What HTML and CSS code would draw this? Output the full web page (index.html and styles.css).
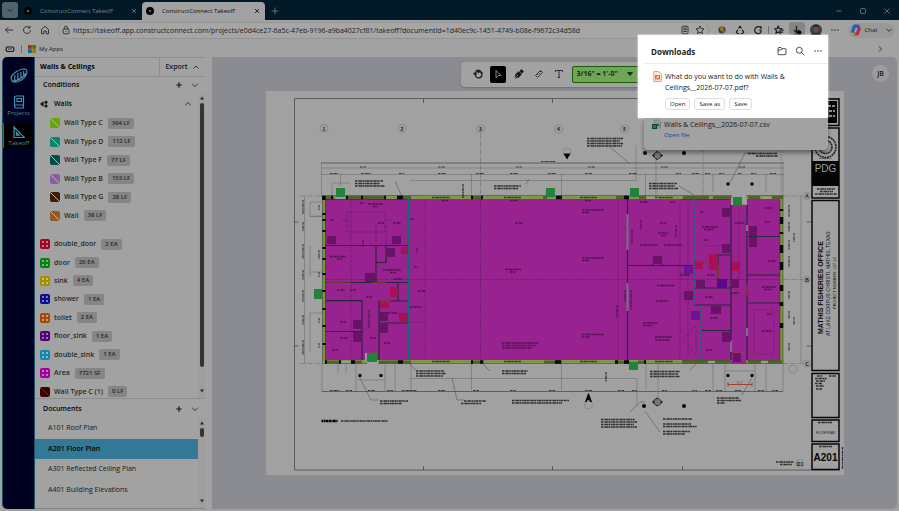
FILE: index.html
```html
<!DOCTYPE html>
<html lang="en">
<head>
<meta charset="utf-8">
<title>ConstructConnect Takeoff</title>
<link rel="stylesheet" href="styles.css">
</head>
<body>
<header class="tabs">
  <button class="tab-menu" aria-label="Tab actions"><svg viewBox="0 0 8 8"><path d="M1.5 3l2.5 2.5L6.500 3"/></svg></button>
  <div class="tab"><span class="favicon"></span><span class="tab-title">ConstructConnect Takeoff</span><button aria-label="Close tab"><svg viewBox="0 0 8 8"><path d="M2 2l4 4M6 2l-4 4"/></svg></button></div>
  <div class="tab active"><span class="favicon"></span><span class="tab-title">ConstructConnect Takeoff</span><button aria-label="Close tab"><svg viewBox="0 0 8 8"><path d="M2 2l4 4M6 2l-4 4"/></svg></button></div>
  <button class="new-tab" aria-label="New tab"><svg viewBox="0 0 8 8"><path d="M4 .5v7M.5 4h7"/></svg></button>
  <div class="window-buttons">
    <button aria-label="Minimize"><svg viewBox="0 0 8 8"><path d="M1.500 4h5"/></svg></button>
    <button aria-label="Maximize"><svg viewBox="0 0 8 8"><rect x="1.500" y="1.500" width="5" height="5" rx="1"/></svg></button>
    <button aria-label="Close"><svg viewBox="0 0 8 8"><path d="M1.500 1.500l5 5M6.500 1.500l-5 5"/></svg></button>
  </div>
</header>
<div class="address-row">
  <button aria-label="Back"><svg viewBox="0 0 10 10"><path d="M9 5H1.500M4.500 2L1.500 5l3 3"/></svg></button>
  <button aria-label="Reload"><svg viewBox="0 0 10 10"><path d="M8.500 5A3.500 3.500 0 1 1 7 2.100M8 .8v2.200H5.800"/></svg></button>
  <button aria-label="Home"><svg viewBox="0 0 10 10"><path d="M1.500 4.500L5 1.200l3.500 3.300v4.300H6.200V6H3.800v2.800H1.500z"/></svg></button>
  <div class="address">
    <svg viewBox="0 0 10 10"><rect x="2" y="4" width="6" height="4.800" rx="1"/><path d="M3.300 4V2.800a1.700 1.700 0 0 1 3.400 0V4M5 6v1"/></svg>
    <input aria-label="Address" value="https://takeoff.app.constructconnect.com/projects/e0d4ce27-6a5c-47eb-9196-a9ba4027cf81/takeoff?documentId=1d40ec9c-1451-4749-b08e-f9672c34d58d">
    <svg viewBox="0 0 10 10"><rect x="2" y="1.200" width="6" height="7.600" rx="1"/><path d="M3.300 3.200h3.400M3.300 4.800h3.400M3.300 6.500h3.400"/></svg>
    <svg viewBox="0 0 10 10"><path d="M5 1l1.200 2.600 2.800.3-2.100 1.900.6 2.800L5 7.200 2.500 8.600l.6-2.800L1 3.900l2.800-.3z"/></svg>
  </div>
  <div class="browser-actions">
    <button aria-label="Extension"><svg viewBox="0 0 10 10"><circle cx="5" cy="5" r="3.600" fill="#4b3a22" stroke="none"/><circle cx="4.800" cy="3.900" r="2" fill="#9a7b12" stroke="none"/><circle cx="6.500" cy="6.600" r="1.500" fill="#5c6a7a" stroke="none"/></svg></button>
    <button aria-label="Recycle"><svg class="bold" viewBox="0 0 10 10"><path d="M3.500 3.500L5 1.300l1.500 2.200M7.200 4.700l1.500 2.500-1 1.300H5.800M2.700 4.700L1.300 7.200l1 1.300h2"/></svg></button>
    <button aria-label="Extensions"><svg class="bold" viewBox="0 0 10 10"><path d="M8 3A3.500 3.500 0 1 0 8 7.300M6 1.800h2V4M6.200 5.300H8v2"/></svg></button>
    <i></i>
    <button aria-label="Favorites"><svg class="bold" viewBox="0 0 10 10"><path d="M4.200 1.200l1 2.300 2.400.3-1.700 1.800.4 2.600-2.100-1.300L2 8.200l.5-2.600L.8 3.800l2.400-.3zM7.500 5.200h2M7.200 7.200h2"/></svg></button>
    <button class="download-button" aria-label="Downloads"><svg class="bold" viewBox="0 0 10 10"><path d="M4.500 1v6M2 5l2.500 2.500L7 5M2 9h5"/><circle cx="7.300" cy="7.600" r="2.200" fill="#000" stroke="none"/></svg></button>
    <button class="profile" aria-label="Profile"><svg viewBox="0 0 12 12"><circle cx="6" cy="6" r="6" fill="#2e4455" stroke="none"/><path d="M1 10.500Q6 6 11 10.500L9 12H3z" fill="#151b2d" stroke="none"/><ellipse cx="6" cy="5.500" rx="2.600" ry="3.500" fill="#78452f" stroke="none"/><path d="M3 3.500Q6-1 9 3.500L8 2.800H4z" fill="#1a1110" stroke="none"/></svg></button>
    <button aria-label="Settings and more"><svg viewBox="0 0 10 10"><path class="dots" d="M2 5h.01M5 5h.01M8 5h.01"/></svg></button>
    <button class="chat"><svg viewBox="0 0 12 12"><path d="M1 7.500L3 1.500Q3.500.5 5 .5h2.500L5 9H2.500Q1 9 1 7.500z" fill="#1766b0" stroke="none"/><path d="M7 .5h1.200q1 0 1.300 1L10 4H6.500z" fill="#6c3fa5" stroke="none"/><path d="M11 4.500L9 10.500q-.4 1-1.500 1H4.500L7 3.500h3q1.300 0 1 1z" fill="#b0305a" stroke="none"/><path d="M2 8.500h3.500l-.7 3H4q-1 0-1.300-1z" fill="#b98418" stroke="none"/><path d="M5.500 4h1.700L6.300 8H4.400z" fill="#aaa" stroke="none"/></svg>Chat<svg class="chevron" viewBox="0 0 8 8"><path d="M1.500 2.800L4 5.300l2.500-2.500"/></svg></button>
  </div>
</div>
<nav class="bookmarks" aria-label="Bookmarks">
  <svg viewBox="0 0 10 10"><rect class="heavy" x="1.200" y="3" width="7.600" height="4.500" rx="1.200"/><path d="M3 5h4"/></svg>
  <i></i>
  <a href="#"><svg viewBox="0 0 8 8"><path fill="#9c3413" stroke="none" d="M0 0h3.800v3.800H0z"/><path fill="#4c7805" stroke="none" d="M4.200 0H8v3.800H4.200z"/><path fill="#006a9b" stroke="none" d="M0 4.200h3.800V8H0z"/><path fill="#a37605" stroke="none" d="M4.200 4.200H8V8H4.200z"/></svg>My Apps</a>
  <button aria-label="More bookmarks"><svg viewBox="0 0 8 8"><path d="M3 1.500L5.500 4 3 6.500"/></svg></button>
</nav>
<main class="app">
  <nav class="rail" aria-label="Main">
    <svg class="logo" viewBox="0 0 18 18"><path d="M2 14Q-.5 10 4 6.500 9 2 14.500 2 18 2.500 16.500 7 14.500 12 8.500 14.500 4.500 16 2 14zM2 14q7 .5 14-7.500M4.800 8v5M7.800 6v7M10.800 5v6.500M13.700 4v4.500"/></svg>
    <a href="#"><svg viewBox="0 0 12 14"><path d="M1.500 11.500V3q0-2 2-2h7v9H3q-1.500 0-1.500 1.500T3 13h7.500v-3M4 3.500h4.500v3H4z"/></svg>Projects</a>
    <a href="#" class="current"><svg viewBox="0 0 12 14"><path d="M1 2v10.500h10.500zM3.500 7.500v2.700h2.700zM1 4h1.500M1 6h1.500"/></svg>Takeoff</a>
  </nav>
  <aside class="panel">
    <div class="project-row"><h1>Walls &amp; Ceilings</h1><button>Export<svg viewBox="0 0 8 8"><path d="M1.500 5.500L4 3l2.500 2.500"/></svg></button></div>
    <section class="conditions">
      <header><h2>Conditions</h2><button aria-label="Add condition"><svg class="bold" viewBox="0 0 8 8"><path d="M4 1.200v5.600M1.200 4h5.600"/></svg></button><button aria-label="Collapse conditions"><svg viewBox="0 0 8 8"><path d="M1.200 2.800L4 5.600l2.800-2.800"/></svg></button></header>
      <div class="scroll-area">
        <div class="condition-list">
          <div class="group-title"><svg viewBox="0 0 8 8"><path d="M.5 4l2.700-2.200v4.400z" fill="#070b10"/><circle cx="6" cy="2.300" r="1.200" fill="#070b10"/><circle cx="6" cy="6" r="1.200" fill="#070b10"/></svg><h3>Walls</h3><button aria-label="Collapse Walls"><svg viewBox="0 0 8 8"><path d="M1.200 5.200L4 2.600l2.800 2.600"/></svg></button></div>
          <ul class="nested">
            <li><span class="swatch line lime"></span>Wall Type C<b>364 LF</b></li>
            <li><span class="swatch line mint"></span>Wall Type D<b>112 LF</b></li>
            <li><span class="swatch line pine"></span>Wall Type F<b>77 LF</b></li>
            <li><span class="swatch line lilac"></span>Wall Type B<b>153 LF</b></li>
            <li><span class="swatch line brown"></span>Wall Type G<b>28 LF</b></li>
            <li><span class="swatch line tan"></span>Wall<b>38 LF</b></li>
          </ul>
          <ul class="items">
            <li><span class="swatch count red"></span>double_door<b>2 EA</b></li>
            <li><span class="swatch count green"></span>door<b>26 EA</b></li>
            <li><span class="swatch count yellow"></span>sink<b>4 EA</b></li>
            <li><span class="swatch count blue"></span>shower<b>1 EA</b></li>
            <li><span class="swatch count orange"></span>toilet<b>2 EA</b></li>
            <li><span class="swatch count purple"></span>floor_sink<b>1 EA</b></li>
            <li><span class="swatch count sky"></span>double_sink<b>1 EA</b></li>
            <li><span class="swatch count pink"></span>Area<b>7721 SF</b></li>
            <li><span class="swatch line maroon"></span>Wall Type C (1)<b>0 LF</b></li>
          </ul>
        </div>
        <div class="scrollbar"><svg viewBox="0 0 6 6"><path d="M1 4.500L3 1.500l2 3z"/></svg><span class="thumb long"></span><span class="track"></span><svg viewBox="0 0 6 6"><path d="M1 1.500L3 4.500l2-3z"/></svg></div>
      </div>
    </section>
    <section class="documents">
      <header><h2>Documents</h2><button aria-label="Add document"><svg class="bold" viewBox="0 0 8 8"><path d="M4 1.200v5.600M1.200 4h5.600"/></svg></button><button aria-label="Collapse documents"><svg viewBox="0 0 8 8"><path d="M1.200 2.800L4 5.600l2.800-2.800"/></svg></button></header>
      <div class="scroll-area">
        <div class="document-list"><a href="#">A101 Roof Plan</a><a href="#" class="selected">A201 Floor Plan</a><a href="#">A301 Reflected Ceiling Plan</a><a href="#">A401 Building Elevations</a></div>
        <div class="scrollbar"><svg viewBox="0 0 6 6"><path d="M1 4.500L3 1.500l2 3z"/></svg><span class="thumb short"></span><span class="track"></span><svg viewBox="0 0 6 6"><path d="M1 1.500L3 4.500l2-3z"/></svg></div>
      </div>
    </section>
  </aside>
  <section class="canvas" aria-label="Drawing">
    <div class="canvas-bar">
      <div class="tools">
        <button aria-label="Pan"><svg viewBox="0 0 10 10"><path class="heavy" d="M2 6L1 4.500l.8-.5L3 5V2l1-.5L5 3V1.200l1 .1V3l1.200-1 .7.5v1.300l1-.2V6.500Q8 9 5.500 9 3.500 9 2 6z"/></svg></button>
        <button class="active" aria-label="Select"><svg viewBox="0 0 10 10"><path d="M3 1.500l5 5H5.500L3 8.800z" stroke="#aaa"/></svg></button>
        <button aria-label="Draw"><svg viewBox="0 0 10 10"><path d="M1 9l1-4 3-2.500 2.500 2.500L5 8zM6 2L7.500.5l2 2L8 4z" fill="#15181c"/><path d="M1 9l3-3" stroke="#999"/></svg></button>
        <button aria-label="Measure"><svg viewBox="0 0 10 10"><path d="M1.500 6.500l5-5 2 2-5 5zM3 5l1 1M4.500 3.500l1 1M6 2l1 1"/></svg></button>
        <button aria-label="Text"><svg viewBox="0 0 10 10"><path d="M1.500 3V1.500h7V3M5 1.500v7M3.800 8.500h2.400"/></svg></button>
        <div class="scale"><select aria-label="Scale"><option>3/16" = 1'-0"</option></select><svg viewBox="0 0 6 6"><path d="M.5 1.500h5L3 4.500z"/></svg></div>
      </div>
      <button class="avatar">JB</button>
    </div>
    <svg class="sheet" viewBox="266 91 578 384" role="img" aria-label="Floor plan sheet A201">
      <rect class="paper" x="266" y="91" width="578" height="384"/>
      <path class="frame" d="M840 98.500H294.500V470H840M423.500 99v4M552.500 99v4M423.500 470v-4M552.500 470v-4M682.500 470v-4M294.500 222h4M294.500 346h4M811 222h-4M811 346h-4"/>
      <!-- grid bubbles and dimension strings -->
      <g class="bubble"><circle cx="324" cy="128.500" r="4"/><circle cx="402" cy="128.500" r="4"/><circle cx="480.500" cy="128.500" r="4"/><circle cx="558.500" cy="129" r="4"/><circle cx="624.500" cy="129" r="4"/><circle cx="807" cy="196" r="3.500"/><circle cx="807" cy="279.500" r="3.500"/><circle cx="807" cy="363.500" r="3.500"/><circle cx="567" cy="152" r="4"/><circle cx="588.500" cy="405" r="4"/><circle cx="793" cy="369" r="4"/><circle cx="800" cy="463.500" r="4"/></g>
      <g class="bubble-text"><text x="324" y="130.500">1</text><text x="402" y="130.500">2</text><text x="480.500" y="130.500">3</text><text x="558.500" y="131">4</text><text x="624.500" y="131">5</text><text x="807" y="198">A</text><text x="807" y="281.500">B</text><text x="807" y="365.500">C</text><text x="800" y="465.500">D1</text></g>
      <path class="dim strong" d="M321.500 163H784M322 391.500H783"/>
      <path class="dim" d="M321.500 168H784M321.500 174.500H784M321.500 162v34M783 162v34M410 180.500H636V145M471.500 174v22M561.500 174v22M645.500 174v22M656 148v68M713 174v18M766 174v18M340.500 174v12M332 183h18M332 183v12M322 363.500V392M410 378.500H637v28M471.500 363.500v27M561.500 363.500v27M646 363.500v27M658 345v55M783 363.500v28M411 363.500v28M356 363.500v28M385 363.500v28M395 363.500v28M346 363.500v10M338 363.500v10M357 380h28M713 363.500v28M725 363.500v28M755 363.500v28M766 363.500v28M725 371h30M304.500 196v167M310 202v14.500h12M310 202h12M310 246v30M310 313v38M801 196v167M310 272h12M310 216h12M310 313h12"/>
      <path class="dim dash" d="M300 196h22M300 363.500h22M783 196h20M783 279.500h20M783 363.500h20M480.500 133v62M703 148v50M781 148v50"/>
      <path class="notes tiny" d="M330 173.500h8M361 173.500h10M399 173.500h5M438 173.500h8M476 173.500h8M510 173.500h8M548 173.500h8M585 173.500h7M629 173.500h8M676 173.500h5M692 173.500h7M705 173.500h5M719 173.500h5M738 173.500h4M751 173.500h5M770 173.500h6M360 167h6M438 167h7M516 167h6M588 167h7M661 167h7M739 167h6M541 161.500h14M330 390.500h9M346 390.500h6M368 390.500h7M387 390.500h6M402 390.500h15M438 390.500h7M473 390.500h6M510 390.500h6M549 390.500h6M585 390.500h7M618 390.500h6M632 390.500h5M662 390.500h5M692 390.500h5M705 390.500h6M716 390.500h6M735 390.500h6M758 390.500h6M772 390.500h6M303 200v14M303 222v9M303 244v15M303 270v10M303 290v12M303 315v10M303 340v15M789 205v12M789 222v10M789 240v10M789 256v11M789 291v8M789 311v8M794 233v9M794 317v8M789 343v8M319 205v5M319 250v9M319 272v5M319 318v5M319 343v5"/>
      <path class="leaders" d="M395 181l7 16M526 184l3-5M610 147l20 17M679 186l15 9M730 183l15-30h10M408 361l8 10M359 376l12 24h7M452 378l5 22h7M645 411l15 21M630 412l10-10h5M752 378l-10 17M697 363l-7 7M482 363l8 8"/>
      <!-- floor area and walls -->
      <path class="area" d="M325 199H731v6h16v-6h33V360H747v4H732v-4H325z"/>
      <path class="wall-outer" d="M324 361V197.500H732M746 197.500h35.500V361.500H746M732 361.500H378M367 361.500H324"/>
      <path class="wall-edge" d="M322.500 363.500V195.500H732M746 195.500h37V363.500H746M732 363.500H378M367 363.500H322.500M325.500 360.500V199.500H411M681 199.500h50M780 199.500V360.500H747M731 360.500H682"/>
      <path class="wall-black" d="M322 197.500h12M346 197.500h40M397 197.500h14M471 197.500h12M543 197.500h4M556 197.500h6M616 197.500h12M639 197.500h7M683 197.500h26M713 197.500h18M748 197.500h12M772 197.500h11M325 362h16M351 362h11M379 362h19M402 362h9M471 362h13M544 362h18M615 362h14M638 362h8M682 362h26M715 362h17M748 362h13M768 362h14"/>
      <path class="wall-dark" d="M324 196v4M324 213v2M324 219v2M324 230v2M324 247v2M324 258v2M324 273v2M324 290v2M324 308v2M324 325v2M324 343v2M781.500 209v2M781.500 217v7M781.500 232v2M781.500 245v8M781.500 262v8M781.500 285v6M781.500 302v4M781.500 323v5M322 197.500h3M331 197.500h2M346 197.500h2M361 197.500h2M384 197.500h2M397 197.500h6M471 197.500h2M481 197.500h2M556 197.500h6M624 197.500h5M325 362h2M339 362h2M351 362h4M398 362h5M471 362h2M480 362h3M555 362h6M615 362h3M624 362h5M644 362h2"/>
      <path class="gap" d="M342 362h8M336 198h9M762 198h9M647 198h12M708 362h7M761 362h7M366 354h5v7h-5z"/>
      <path class="wall-inner" d="M325 245.500h83M376 245.500v37M386 245.500v17h-10M325 282.500h83M326 300.700h36v59.300M326 331.500h36M408 301h-29v59M379 323h29M398 283v18M627.500 199v161M628 265.500h66M695 262h23v-7h13v33h-36M718 262v18M731 205v155M747 205v155M748 236.500h32M748 275h32M748 303h32M694 305h37M701 330.500h30M653 265.500v-2h9v2"/>
      <path class="teal-wall" d="M408.500 198v162M694 199v106M701 305v55"/>
      <path class="glass" d="M627.500 214v36M627.500 283v28M731 340v12M747 225v6M747 328v8"/>
      <path class="accent" d="M326 283h24M372 283h14M396 287v9M380 301h10M370 353h7M696 262h14M718 265v13M726 281v7M733 205h13M747 285v10M734 353h10"/>
      <path class="faint" d="M351 199v161M425 199v161M480.500 199v161M618 199v161M325 279.500h455M347 212h38v20h-38zM342 220h6M386 220h6M410 322h15M376 225v20M386 225v20M688 202v155M739 210v70M754 310h20v44h-20zM683 340l13-15v30zM703 246h28M680 206v155"/>
      <path class="door" d="M327 236h9v8h-9zM392 236h9v8h-9zM387 248h8v9h-8zM365 273h10v9h-10zM379 312h9v9h-9zM353 320h8v9h-8zM353 332h8v10h-8zM379 324h9v9h-9zM722 208h8v9h-8zM722 244h8v9h-8zM749 226h8v10h-8zM749 237h8v10h-8zM653 256h9v8h-9zM684 291h9v9h-9zM696 280h9v8h-9zM732 279h7v9h-7zM711 306h10v8h-10zM722 332h9v10h-9zM733 353h8v9h-8z"/>
      <path class="purple-mark" d="M717 279h10v9h-10z"/><path class="violet-mark" d="M684 266h9v8h-9zM691 311h9v9h-9z"/>
      <path class="red-mark" d="M401 247h7v7h-7zM390 287h8v10h-8zM380 302h9v6h-9zM399 313h9v9h-9zM695 262h8v7h-8zM709 254h9v16h-9zM732 262h8v9h-8z"/>
      <path class="green-mark" d="M336 188h9v9h-9zM546 188h9v9h-9zM630 188h9v9h-9zM733 197h9v8h-9zM314 289h8v10h-8zM367 353h10v9h-10zM629 362h9v8h-9z"/>
      <path class="notes inside" d="M368 204h15M373 206.500h5M360 203h4M331 220h3M378 223h6M393 223h8M330 256.500h16M337 259h5M383 270h18M390 272.500h6M394 279h8M337 290h8M350 290h6M418 291h8M366 297h6M410 307h12M340 322h6M388 313h10M332 350h6M384 343h6M340 338h8M370 338h6M363 240v7M369 310v18M410 219h4M417 248v5M414 267h4M515 223h8M505 269.500h16M510 272h6M582 210h22M582 212.500h7M582 258h22M582 260.500h7M442 200.500h6M510 200.500h8M585 200.500h6M582 334.500h22M582 337h8M502 343h36M502 345.500h34M502 348h30M640 245h18M664 245h18M658 233h10M661 235.500h5M660 223h6M657 285.500h18M656 301h12M643 323h15M643 325.500h10M655 337h17M655 340h15M676 225v12M632 230v14M631 290v20M625 290v12M617 305v12M702 227h16M704 229.500h10M735 223h10M765 208h8M768 261h8M762 287h14M764 289.500h8M762 331h10M707 275h8M730 293h9M710 318h8M706 350h6M705 297h8M700 212h4M704 240h5M640 202h8M670 202h5M641 220v10M680 275h10M765 222h5M767 314h5"/>
      <path class="notes wall-label" d="M432 197.500h18M504 197.500h17M580 197.500h17M655 197.500h18M432 361.500h18M504 361.500h17M580 361.500h17M655 361.500h18"/>
      <!-- drawing notes -->
      <path class="notes" d="M587 138.500h36M587 141h33M587 143.500h36M587 146h35M355 181h28M355 183.500h25M355 186h30M494 186h27M494 188.500h24M649 183.500h28M649 186h26M649 188.500h29M748 153.500h29M756 156h22M416 371h28M416 373.500h30M416 376h27M380 401h28M380 403.500h22M464 401h22M461 403.500h20M502 371h26M502 373.500h24M512 400.500h57M512 403h50M601 419.500h34M601 422h36M601 424.500h33M601 427h36M650 371.500h30M650 374h28M650 376.500h30M663 419h29M663 424h28M663 426.500h34M663 431.500h27M663 434h22M717 398h22M717 400.500h24M717 403h8M776 462h18M780 464.500h12M817 189h18M820 191.500h13M815 194h22M817 376h5M829 376h7M815 378.500h12M816 381h9M815 383.500h7M816 386h8M816 389h6M463 184v14M606 372v10M842.500 447v22M818 422.500h14M819 446.500h13"/>
      <path class="notes heading" d="M321.500 421h16"/><path class="notes" d="M341 421h47"/>
      <path class="black" d="M563.500 153.500h7l-3.500 6zM652 155.500l5-4.500 6 4.500-6 4.500zM652 402l5-4.500 6 4.500-6 4.500zM585 402l3-8.500h1l3 8.500h-2l-.6-1.800h-2.200l-.6 1.800z"/>
      <g class="black"><circle cx="645" cy="153" r="2"/><circle cx="684" cy="153" r="2"/><circle cx="728" cy="184" r="1.700"/><circle cx="752" cy="184" r="1.700"/><circle cx="360" cy="375.500" r="1.700"/><circle cx="381" cy="375.500" r="1.700"/><circle cx="644" cy="406" r="2"/><circle cx="684" cy="406" r="2"/><circle cx="728" cy="375.500" r="1.700"/><circle cx="752" cy="375.500" r="1.700"/></g>
      <circle class="target" cx="657.500" cy="155.500" r="3.500"/><circle class="target" cx="657.500" cy="402" r="3.500"/>
      <path class="red-dim" d="M728 384.500h24M728 382.500v4M752 382.500v4"/><text class="red-text" x="740" y="383.500">8'-0"</text>
      <!-- title block -->
      <path class="block" d="M812 99h27v26.500h-27zM812 128h27v70h-27zM812 200.500h27v170h-27zM812 373.500h27v44h-27zM812 420h27v21.500h-27zM812 444h27v25.500h-27z"/>
      <path class="black" d="M814 101h23v22h-23zM812 161h27v25h-27z"/>
      <path class="light" d="M817 106h8M817 111h18M817 116h18M828 106h7"/>
      <g class="seal"><circle cx="825.500" cy="147" r="10.500"/><circle cx="825.500" cy="147" r="6.500"/><path d="M819 158.500h13"/></g>
      <text class="pdg" x="825.500" y="172">PDG</text>
      <text class="t-project" transform="translate(822.500 334) rotate(-90)">MATHIS FISHERIES OFFICE</text>
      <text class="t-place" transform="translate(830 336) rotate(-90)">AT LAKE CORPUS CHRISTI, MATHIS, TEXAS</text>
      <text class="t-number" transform="translate(836 309) rotate(-90)">PROJECT NUMBER: 127-14</text>
      <text class="t-sheet" x="825.500" y="434">FLOOR PLAN</text>
      <text class="t-code" x="825.500" y="461">A201</text>
    </svg>
  </section>
</main>
<div class="downloads" role="dialog" aria-labelledby="downloads-title">
  <div class="spotlight">
    <header><h2 id="downloads-title">Downloads</h2>
      <button aria-label="Open folder"><svg viewBox="0 0 10 10"><path d="M1 2.500Q1 1.500 2 1.500h2l1 1.200h3Q9 2.700 9 3.500V8Q9 8.700 8 8.700H2Q1 8.700 1 8zM1 4h3l1-1.300"/></svg></button>
      <button aria-label="Search downloads"><svg viewBox="0 0 10 10"><circle cx="4.300" cy="4.300" r="3"/><path d="M6.500 6.500L9.200 9.200"/></svg></button>
      <button aria-label="More options"><svg viewBox="0 0 10 10"><path class="dots" d="M2 5h.01M5 5h.01M8 5h.01"/></svg></button></header>
    <div class="download">
      <svg class="file-icon" viewBox="0 0 9 11"><path d="M.8.600h5l2.500 2.500v7.300H.8z" fill="#fff1e8" stroke="#ed7d3a"/><path d="M2 4h5v4.500H2z" fill="#e9682a" stroke="none"/><path d="M3 7.500L6 5M4 5l1.500 2.500" stroke="#fff"/></svg>
      <div><p>What do you want to do with Walls &amp;<br>Ceilings__2026-07-07.pdf?</p><div class="choices"><button>Open</button><button>Save as</button><button>Save</button></div></div>
    </div>
  </div>
  <div class="finished">
    <svg class="file-icon" viewBox="0 0 9 11"><path d="M2.500 1h4l2 2v6h-6z" fill="#999" stroke="#777"/><path d="M4 7l2-3 2 3z" fill="#216b3d" stroke="none"/><path d="M0 5h5v5H0z" fill="#034a20" stroke="none"/><path d="M1.500 6.300l2 2.400M3.500 6.300l-2 2.400" stroke="#aaa"/></svg>
    <div><p>Walls &amp; Ceilings__2026-07-07.csv</p><a href="#">Open file</a></div>
  </div>
</div>
</body>
</html>
```
FILE: styles.css
```css
:root {
  --paper: #a2a2a2;
  --line: #8d8d8d;
  --ink: #15181c;
  --small: 6px;
  --base: 7px;
}
* { box-sizing: border-box; }
body {
  margin: 0;
  min-height: 100vh;
  display: flex;
  flex-direction: column;
  background: var(--paper);
  color: var(--ink);
  font: var(--base)/10px "Open Sans", "Noto Sans", sans-serif;
}
button, input, select { margin: 0; padding: 0; border: 0; background: none; color: inherit; font: inherit; }
button { display: flex; align-items: center; justify-content: center; }
h1, h2, h3, p, ul { margin: 0; padding: 0; font-size: inherit; list-style: none; }
a { color: inherit; text-decoration: none; }
svg { display: block; fill: none; stroke: currentColor; stroke-width: .8; flex: none; }
svg .heavy, svg.bold { stroke-width: 1.2; }
.dots { stroke-width: 1.4; stroke-linecap: round; }

/* browser frame */
.tabs { display: flex; align-items: stretch; height: 20px; padding: 2px 8px 0 2px; background: #021a28; color: #77838a; font-size: var(--small); }
.tabs svg { width: 8px; height: 8px; }
.tab-menu { width: 16px; height: 16px; border-radius: 3px; background: #53636c; color: #061520; }
.tab { display: flex; align-items: center; width: 124px; padding: 0 4px 0 6px; gap: 8px; }
.tab.active { width: 123px; background: var(--paper); color: #0a0c0e; border-radius: 4px 4px 0 0; padding: 0 4px; }
.tab-title { flex: 1; white-space: nowrap; }
.favicon { width: 8px; height: 8px; border: 3px solid #000; border-radius: 50%; background: #888; }
.new-tab { width: 20px; }
.window-buttons { display: flex; gap: 16px; margin-left: auto; }
.address-row { display: flex; align-items: center; height: 20px; padding: 0 4px; gap: 8px; }
.address-row svg, .bookmarks > svg { width: 10px; height: 10px; }
.address-row > button { width: 10px; }
.address { display: flex; flex: 1; align-items: center; gap: 2px; height: 17px; padding: 0 3px 0 2px; border: 1px solid #949494; border-radius: 9px; background: #a6a6a6; }
.address svg + svg { margin-left: 3px; }
.address input { flex: 1; min-width: 0; height: 14px; color: #202224; outline: 0; }
.browser-actions { display: flex; align-items: center; gap: 8px; }
.browser-actions i, .bookmarks i { width: 1px; height: 8px; background: #6d6d6d; }
.browser-actions i { margin: 0 -3px; }
.download-button { width: 16px; height: 16px; background: #868686; border-radius: 3px; margin: 0 -3px; }
.address-row .profile svg, .address-row .chat svg { width: 12px; height: 12px; }
.chat { gap: 3px; width: 47px; height: 15px; border-radius: 8px; background: #999; font-size: var(--small); }
.address-row .chat .chevron { width: 8px; height: 8px; margin-left: 5px; }
.bookmarks { display: flex; align-items: center; height: 17px; padding: 0 15px 0 5px; gap: 6px; font-size: var(--small); }
.bookmarks a { display: flex; align-items: center; gap: 3px; }
.bookmarks a svg, .bookmarks button svg { width: 8px; height: 8px; }
.bookmarks button { margin-left: auto; }

/* application */
.app { display: flex; flex: 1; min-height: 0; padding: 0 2px 2px; }
.rail { width: 33px; display: flex; flex-direction: column; align-items: stretch; background: #000020; color: #4590ae; border-left: 1px solid #15536b; border-right: 1px solid #15536b; border-radius: 5px 0 0 5px; font-size: var(--small); line-height: 8px; }
.logo { width: 18px; height: 18px; margin: 10px auto; stroke-width: 1.2; }
.rail a { display: flex; flex-direction: column; align-items: center; justify-content: center; height: 22px; }
.rail a svg { width: 12px; height: 14px; stroke-width: 1.2; }
.rail .current { height: 25px; margin-top: 6px; background: #000; border-left: 1px solid #1b6cad; }
.panel { width: 170px; display: flex; flex-direction: column; border-top: 1px solid var(--line); border-bottom: 1px solid #888; }
.panel svg { width: 8px; height: 8px; }
.panel h1, .panel h2, .panel h3 { font-weight: 700; color: #050608; }
.project-row { display: flex; height: 19px; border-bottom: 1px solid var(--line); }
.project-row h1 { flex: 1; padding-left: 5px; line-height: 17px; }
.project-row button { width: 46px; gap: 4px; border-left: 1px solid var(--line); font-weight: 600; }
.panel header { display: flex; align-items: center; height: 16px; padding: 0 6px 0 8px; gap: 8px; }
.panel header h2 { flex: 1; font-weight: 600; }
.conditions { flex: 1; display: flex; flex-direction: column; min-height: 0; border-bottom: 1px solid var(--line); }
.scroll-area { flex: 1; display: flex; min-height: 0; }
.condition-list { flex: 1; display: flex; flex-direction: column; font-weight: 600; overflow: hidden; }
.group-title { display: flex; align-items: center; gap: 6px; height: 21px; padding: 0 6px 0 5px; }
.group-title h3 { flex: 1; font-weight: 600; }
.nested, .items { display: flex; flex-direction: column; flex: 6; }
.nested { padding-left: 15px; }
.items { flex: 9; margin: 10px 0 -3px; padding-left: 5px; }
.condition-list li { flex: 1; display: flex; align-items: center; gap: 4px; color: #25282b; }
.condition-list b { height: 11px; margin-left: 1px; padding: 0 4px; border-radius: 2px; background: #858585; font-size: var(--small); font-weight: 600; line-height: 11px; }
.swatch { width: 10px; height: 10px; border-radius: 2px; }
.swatch.line { background-image: linear-gradient(45deg, transparent 45%, #b9b9a0 46%, #b9b9a0 54%, transparent 55%); }
.swatch.count { background-image: linear-gradient(#ffffff70, #ffffff70), linear-gradient(#ffffff70, #ffffff70), linear-gradient(#ffffff70, #ffffff70), linear-gradient(#ffffff70, #ffffff70); background-size: 2px 2px; background-position: 2px 2px, 6px 2px, 2px 6px, 6px 6px; background-repeat: no-repeat; }
.lime { background-color: #67a600; } .mint { background-color: #0b8667; } .pine { background-color: #064e43; }
.lilac { background-color: #8a5cb0; } .brown { background-color: #421b02; } .tan { background-color: #925b22; }
.red { background-color: #9b0722; } .green { background-color: #078014; } .yellow { background-color: #a19000; }
.blue { background-color: #0d0d90; } .orange { background-color: #a44a06; } .purple { background-color: #540078; }
.sky { background-color: #1686ac; } .pink { background-color: #a000a0; }
.swatch.maroon { background-color: #3a0000; background-image: linear-gradient(45deg, transparent 45%, #96151c 46%, #96151c 54%, transparent 55%); }
.scrollbar { width: 7px; display: flex; flex-direction: column; align-items: center; padding: 2px 0 4px; gap: 2px; background: #9e9e9e; }
.scrollbar svg { width: 6px; height: 6px; fill: #2a2a2a; stroke: none; }
.thumb { width: 4px; border-radius: 2px; background: #333; }
.thumb.long { flex: 265; }
.track { flex: 17; }
.thumb.short { height: 9px; }
.short + .track { flex: 1; }
.documents { height: 109px; display: flex; flex-direction: column; }
.documents header { height: 19px; }
.document-list { flex: 1; display: flex; flex-direction: column; padding-bottom: 8px; }
.document-list a { flex: 1; display: flex; align-items: center; padding-left: 13px; color: #15181b; }
.document-list .selected { background: #337894; color: #020507; font-weight: 600; }

/* drawing area */
.canvas { flex: 1; min-width: 0; margin-left: 7px; background: #8a8c91; border-radius: 0 5px 5px 0; }
.canvas-bar { display: flex; align-items: center; justify-content: center; height: 34px; position: relative; }
.tools { display: flex; align-items: center; gap: 4px; width: 188px; height: 25px; padding: 0 9px; border-radius: 4px; background: var(--paper); box-shadow: 0 1px 2px #5558; }
.tools button { width: 17px; height: 17px; border-radius: 2px; }
.tools button svg { width: 10px; height: 10px; }
.tools .active { background: #000; }
.scale { display: flex; align-items: center; height: 17px; width: 68px; border: 1px solid #1b5c04; border-radius: 2px; background: #71a45b; color: #0b3302; flex: none; }
.scale select { flex: 1; min-width: 0; appearance: none; padding-left: 4px; font-weight: 700; }
.scale svg { width: 6px; height: 6px; margin-right: 6px; fill: currentColor; }
.avatar { position: absolute; right: 8px; top: 8px; width: 17px; height: 17px; border-radius: 50%; background: #9c9c9c; font-weight: 600; }
.sheet { width: calc(100% - 107px); height: auto; margin: 0 53px 0 54px; stroke: none; font-family: "Liberation Sans", sans-serif; }
.paper { fill: #a1a1a1; }
.sheet path { fill: none; stroke: #111; stroke-width: .5; }
.sheet .frame { stroke: #3c3c3c; stroke-width: .7; }
.bubble { stroke: #666; stroke-width: .4; }
.bubble-text { fill: #111; font-size: 5px; font-weight: 700; text-anchor: middle; }
.sheet .dim { stroke: #555; stroke-width: .4; }
.sheet .strong { stroke: #333; stroke-width: .6; }
.sheet .dash { stroke-dasharray: 5 1 1 1; }
.sheet .leaders { stroke: #333; stroke-width: .4; }
.sheet .area { fill: #982390; stroke: none; }
.sheet .wall-outer { stroke: #789831; stroke-width: 2.6; }
.sheet .wall-edge { stroke: #26311a; stroke-width: .5; }
.sheet .wall-black { stroke: #39461c; stroke-width: 3; opacity: .65; }
.sheet .wall-dark { stroke: #050805; stroke-width: 3.4; }
.sheet .gap { stroke: #999; stroke-width: 2; }
.sheet .wall-inner { stroke: #29263a; stroke-width: 1.2; }
.sheet .teal-wall { stroke: #08716d; stroke-width: 2; stroke-dasharray: 3 1; }
.sheet .glass { stroke: #777386; stroke-width: 2; }
.sheet .accent { stroke: #91511c; stroke-width: 1; }
.sheet .faint { stroke: #4a1648; stroke-width: .4; stroke-dasharray: 4 1; }
.sheet .door { fill: #681368; stroke: none; }
.sheet .purple-mark { fill: #5b078c; stroke: none; }
.sheet .violet-mark { fill: #701299; stroke: none; }
.sheet .red-mark { fill: #aa0e55; stroke: none; }
.sheet .green-mark { fill: #21843a; stroke: none; }
.sheet .notes { stroke: #111; stroke-width: 1.3; stroke-dasharray: 2 .5 1 .4 3 .5; opacity: .8; }
.sheet .tiny { stroke-width: 1.2; opacity: .7; }
.sheet .inside { stroke: #300b30; opacity: .65; }
.sheet .wall-label { stroke: #1c250c; }
.sheet .heading { stroke: #000; stroke-width: 2.4; opacity: 1; }
.sheet .black, .black circle { fill: #050505; stroke: none; }
.target { fill: #777; stroke: #222; stroke-width: .5; }
.sheet .red-dim { stroke: #a8241c; stroke-width: .8; }
.red-text { fill: #a8241c; font-size: 3px; text-anchor: middle; }
.sheet .block { stroke: #080808; stroke-width: 1.5; }
.sheet .light { stroke: #8b8b8b; stroke-width: 2; stroke-dasharray: 3 1; }
.seal { stroke: #222; stroke-width: 1.6; stroke-dasharray: 2 .6; }
.pdg { fill: #a2a2a2; font-size: 10px; text-anchor: middle; }
.t-project { fill: #080808; font-size: 7px; font-weight: 700; }
.t-place { fill: #080808; font-size: 5px; }
.t-number { fill: #111; font-size: 4px; }
.t-sheet { fill: #111; font-size: 3px; text-anchor: middle; }
.t-code { fill: #050505; font-size: 10px; font-weight: 700; text-anchor: middle; }

/* downloads flyout */
.downloads { position: absolute; top: 35px; right: 71px; width: 190px; line-height: 11px; }
.spotlight { padding-left: 6px; background: #fff; box-shadow: 0 0 2px #fff; color: #222; }
.downloads header { display: flex; align-items: center; height: 29px; padding: 4px 5px 0 7px; gap: 8px; border-bottom: 1px solid #eee; }
.downloads h2 { flex: 1; font-size: 8px; font-weight: 700; }
.downloads header svg { width: 10px; height: 10px; }
.download, .finished { display: flex; align-items: flex-start; gap: 3px; padding: 7px 4px 8px 9px; }
.file-icon { width: 9px; height: 11px; }
.choices { display: flex; gap: 4px; margin-top: 5px; }
.choices button { height: 12px; padding: 0 4px; border: 1px solid #ddd; border-radius: 3px; font-size: var(--small); }
.finished { margin-left: 6px; padding: 1px 4px 9px 8px; background: var(--paper); border-radius: 0 0 4px 4px; box-shadow: 0 3px 4px #0006; color: #17191b; }
.finished a { display: block; color: #153f95; font-size: var(--small); }
```
